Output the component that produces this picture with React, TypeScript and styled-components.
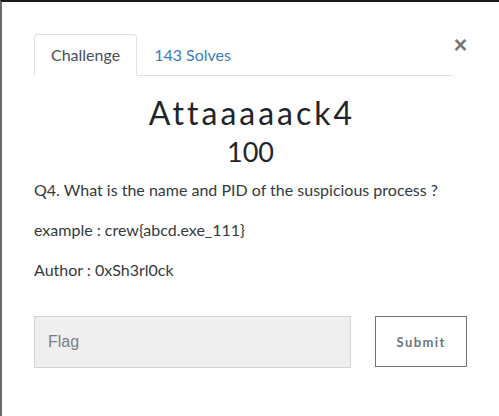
import React from "react";
import styled, { createGlobalStyle } from "styled-components";

const Global = createGlobalStyle`
  html, body { margin: 0; padding: 0; background: #ffffff; }
  body { font-family: Lato, "Noto Sans", sans-serif; }
  * { box-sizing: border-box; }
`;

const Frame = styled.div`
  width: 499px;
  height: 416px;
  overflow: hidden;
  border-top: 2px solid #1b1b1b;
  border-left: 2px solid #6a6a6a;
  background: #fff;
`;

const Body = styled.div`
  padding: 32px 32px 0 32px;
  display: flex;
  flex-direction: column;
`;

const HeaderRow = styled.div`
  display: flex;
  align-items: flex-start;
`;

const Tabs = styled.nav`
  flex: 1;
  display: flex;
  border-bottom: 1px solid #dee2e6;
`;

const Tab = styled.a<{ $active?: boolean }>`
  display: block;
  padding: 8px 16px;
  margin-bottom: -1px;
  font-size: 16px;
  line-height: 24px;
  border: 1px solid ${(p) => (p.$active ? "#dee2e6" : "transparent")};
  border-bottom-color: ${(p) => (p.$active ? "#fff" : "transparent")};
  border-radius: 4px 4px 0 0;
  background: ${(p) => (p.$active ? "#fff" : "transparent")};
  color: ${(p) => (p.$active ? "#495057" : "#3b7bbf")};
  text-decoration: none;
`;

const Close = styled.button`
  border: 0;
  background: none;
  padding: 0;
  margin: -1px 0 0 1px;
  width: 13px;
  height: 24px;
  font-family: "Liberation Sans", Arial, sans-serif;
  font-size: 23px;
  font-weight: 700;
  line-height: 24px;
  color: #777;
  display: flex;
  align-items: center;
  justify-content: center;
`;

const Title = styled.h2`
  margin: 18px 0 0 0;
  text-align: center;
  font-family: Lato, sans-serif;
  font-weight: 400;
  font-size: 32px;
  line-height: 38px;
  letter-spacing: 3px;
  padding-left: 3px;
  color: #212529;
`;

const Value = styled.h3`
  margin: 4px 0 0 0;
  text-align: center;
  font-weight: 400;
  font-size: 27px;
  line-height: 32px;
  color: #212529;
`;

const Description = styled.div`
  margin-top: 10px;
  color: #343a40;
`;

const Para = styled.p`
  margin: 0 0 16px 0;
  font-size: 16px;
  line-height: 24px;
`;

const FormRow = styled.form`
  display: flex;
  gap: 24px;
  margin-top: 18px;
  align-items: flex-start;
`;

const FlagInput = styled.input`
  width: 318px;
  height: 52px;
  padding: 0 13px;
  background: #efefef;
  border: 1px solid #ced4da;
  border-radius: 0;
  font-family: "Liberation Sans", Arial, sans-serif;
  font-size: 16px;
  color: #495057;
  outline: none;
  &::placeholder { color: #7a7f85; }
`;

const SubmitButton = styled.button`
  width: 92px;
  height: 51px;
  background: #fff;
  border: 1px solid #6c757d;
  border-radius: 0;
  font-family: Lato, sans-serif;
  font-weight: 700;
  font-size: 13px;
  letter-spacing: 1.4px;
  color: #6c757d;
`;

export default function App() {
  return (
    <>
      <Global />
      <Frame>
        <Body>
          <HeaderRow>
            <Tabs>
              <Tab $active>Challenge</Tab>
              <Tab>143 Solves</Tab>
            </Tabs>
            <Close aria-label="Close">×</Close>
          </HeaderRow>
          <Title>Attaaaaack4</Title>
          <Value>100</Value>
          <Description>
            <Para>Q4. What is the name and PID of the suspicious process ?</Para>
            <Para>example : crew{"{"}abcd.exe_111{"}"}</Para>
            <Para>Author : 0xSh3rl0ck</Para>
          </Description>
          <FormRow onSubmit={(e) => e.preventDefault()}>
            <FlagInput placeholder="Flag" />
            <SubmitButton type="submit">Submit</SubmitButton>
          </FormRow>
        </Body>
      </Frame>
    </>
  );
}
